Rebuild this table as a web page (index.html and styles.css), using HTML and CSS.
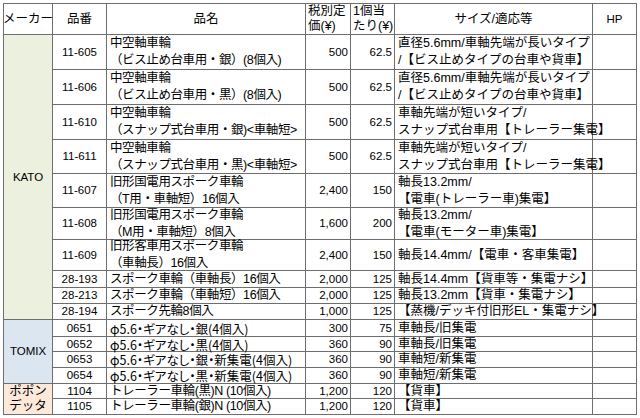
FILE: index.html
```html
<!DOCTYPE html>
<html lang="ja">
<head>
<meta charset="utf-8">
<title>車輪一覧</title>
<link rel="stylesheet" href="styles.css">
</head>
<body>
<div class="sheet">
  <div class="c ctr hd0">メーカー</div>
  <div class="c ctr">品番</div>
  <div class="c ctr">品名</div>
  <div class="c hd"><span>税別定<br>価(¥)</span></div>
  <div class="c hd"><span>1個当<br>たり(¥)</span></div>
  <div class="c ctr">サイズ/適応等</div>
  <div class="c ctr num">HP</div>

  <div class="c ctr num kato">KATO</div>
  <div class="c ctr num">11-605</div>
  <div class="c nm"><span>中空軸車輪<br>（ビス止め台車用・銀）(8個入)</span></div>
  <div class="c r num">500</div>
  <div class="c r num">62.5</div>
  <div class="c sz"><span>直径5.6mm/車軸先端が長いタイプ<br>/【ビス止めタイプの台車や貨車】</span></div>
  <div class="c"></div>

  <div class="c ctr num">11-606</div>
  <div class="c nm"><span>中空軸車輪<br>（ビス止め台車用・黒）(8個入)</span></div>
  <div class="c r num">500</div>
  <div class="c r num">62.5</div>
  <div class="c sz"><span>直径5.6mm/車軸先端が長いタイプ<br>/【ビス止めタイプの台車や貨車】</span></div>
  <div class="c"></div>

  <div class="c ctr num">11-610</div>
  <div class="c nm"><span>中空軸車輪<br>（スナップ式台車用・銀)&lt;車軸短&gt;</span></div>
  <div class="c r num">500</div>
  <div class="c r num">62.5</div>
  <div class="c sz"><span>車軸先端が短いタイプ/<br>スナップ式台車用【トレーラー集電】</span></div>
  <div class="c"></div>

  <div class="c ctr num">11-611</div>
  <div class="c nm"><span>中空軸車輪<br>（スナップ式台車用・黒)&lt;車軸短&gt;</span></div>
  <div class="c r num">500</div>
  <div class="c r num">62.5</div>
  <div class="c sz"><span>車軸先端が短いタイプ/<br>スナップ式台車用【トレーラー集電】</span></div>
  <div class="c"></div>

  <div class="c ctr num">11-607</div>
  <div class="c nm"><span>旧形国電用スポーク車輪<br>（T用・車軸短）16個入</span></div>
  <div class="c r num">2,400</div>
  <div class="c r num">150</div>
  <div class="c sz"><span>軸長13.2mm/<br>【電車(トレーラー車)集電】</span></div>
  <div class="c"></div>

  <div class="c ctr num">11-608</div>
  <div class="c nm"><span>旧形国電用スポーク車輪<br>（M用・車軸短）8個入</span></div>
  <div class="c r num">1,600</div>
  <div class="c r num">200</div>
  <div class="c sz"><span>軸長13.2mm/<br>【電車(モーター車)集電】</span></div>
  <div class="c"></div>

  <div class="c ctr num">11-609</div>
  <div class="c nm"><span>旧形客車用スポーク車輪<br>（車軸長）16個入</span></div>
  <div class="c r num">2,400</div>
  <div class="c r num">150</div>
  <div class="c sz">軸長14.4mm/【電車・客車集電】</div>
  <div class="c"></div>

  <div class="c ctr num">28-193</div>
  <div class="c nm">スポーク車輪（車軸長）16個入</div>
  <div class="c r num">2,000</div>
  <div class="c r num">125</div>
  <div class="c sz">軸長14.4mm【貨車等・集電ナシ】</div>
  <div class="c"></div>

  <div class="c ctr num">28-213</div>
  <div class="c nm">スポーク車輪（車軸短）16個入</div>
  <div class="c r num">2,000</div>
  <div class="c r num">125</div>
  <div class="c sz">軸長13.2mm【貨車・集電ナシ】</div>
  <div class="c"></div>

  <div class="c ctr num">28-194</div>
  <div class="c nm">スポーク先輪8個入</div>
  <div class="c r num">1,000</div>
  <div class="c r num">125</div>
  <div class="c sz">【蒸機/デッキ付旧形EL・集電ナシ】</div>
  <div class="c"></div>

  <div class="c ctr num tomix">TOMIX</div>
  <div class="c ctr num">0651</div>
  <div class="c nm pr">φ5.6・ギアなし・銀(4個入)</div>
  <div class="c r num">300</div>
  <div class="c r num">75</div>
  <div class="c sz">車軸長/旧集電</div>
  <div class="c"></div>

  <div class="c ctr num">0652</div>
  <div class="c nm pr">φ5.6・ギアなし・黒(4個入)</div>
  <div class="c r num">360</div>
  <div class="c r num">90</div>
  <div class="c sz">車軸長/旧集電</div>
  <div class="c"></div>

  <div class="c ctr num">0653</div>
  <div class="c nm pr">φ5.6・ギアなし・銀・新集電(4個入)</div>
  <div class="c r num">360</div>
  <div class="c r num">90</div>
  <div class="c sz">車軸短/新集電</div>
  <div class="c"></div>

  <div class="c ctr num">0654</div>
  <div class="c nm pr">φ5.6・ギアなし・黒・新集電(4個入)</div>
  <div class="c r num">360</div>
  <div class="c r num">90</div>
  <div class="c sz">車軸短/新集電</div>
  <div class="c"></div>

  <div class="c ctr popon"><span>ポポン<br>デッタ</span></div>
  <div class="c ctr num">1104</div>
  <div class="c nm">トレーラー車輪(黒)N (10個入)</div>
  <div class="c r num">1,200</div>
  <div class="c r num">120</div>
  <div class="c sz">【貨車】</div>
  <div class="c"></div>

  <div class="c ctr num">1105</div>
  <div class="c nm">トレーラー車輪(銀)N (10個入)</div>
  <div class="c r num">1,200</div>
  <div class="c r num">120</div>
  <div class="c sz">【貨車】</div>
  <div class="c"></div>
</div>
</body>
</html>
```

FILE: styles.css
```css
html, body {
  background: #ffffff;
}

body {
  margin: 3px 0 0 3px;
  font-family: "Liberation Sans", "Noto Sans CJK JP", sans-serif;
  font-size: 12.5px;
  color: #000000;
}

.sheet {
  display: grid;
  width: max-content;
  grid-template-columns: 49px 54px 199px 45px 44px 198px 44px;
  grid-template-rows: 31px 35px 35px 35px 34px 34px 32px 31px 17px 16px 16px 17px 15px 16px 16px 15px 16px;
  border-top: 1px solid #6e6e6e;
  border-left: 1px solid #6e6e6e;
}

.c {
  box-sizing: border-box;
  display: flex;
  align-items: center;
  border-right: 1px solid #6e6e6e;
  border-bottom: 1px solid #6e6e6e;
  padding: 0 2px;
  line-height: 17px;
  white-space: nowrap;
  overflow: visible;
}

.ctr {
  justify-content: center;
  text-align: center;
}

.r {
  justify-content: flex-end;
}

.num {
  font-size: 11.5px;
}

.hd {
  line-height: 15px;
}

.hd0 {
  padding: 0;
}

.nm {
  padding-left: 3px;
  letter-spacing: -0.4px;
}

.pr {
  font-family: "Noto Sans CJK JP", sans-serif;
  font-feature-settings: "palt";
  letter-spacing: 0;
}

.sz {
  padding-left: 3px;
}

.kato {
  grid-row: span 10;
  background: #ebf1de;
}

.tomix {
  grid-row: span 4;
  background: #dce6f1;
}

.popon {
  grid-row: span 2;
  background: #fde9d9;
  line-height: 15px;
}
```
